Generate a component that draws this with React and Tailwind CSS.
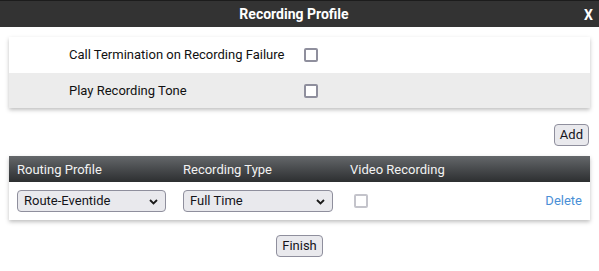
import React from "react";

const Chevron = () => (
  <svg width="9" height="6" viewBox="0 0 9 6" className="absolute right-[7px] top-[8px]">
    <path d="M1 1l3.5 3.5L8 1" fill="none" stroke="#1a1a1a" strokeWidth="1.8" />
  </svg>
);

const Select = ({ value, width }) => (
  <div
    className={`relative h-[22px] ${width} rounded-[4px] border border-[#8f8f9d] bg-[#e9e9ed] pl-[6px] text-[13px] leading-[20px] text-[#15141a]`}
  >
    {value}
    <Chevron />
  </div>
);

const Box = ({ disabled }) => (
  <div
    className={`h-[14px] w-[14px] rounded-[2px] border-2 ${disabled ? "border-[#c4c4cb]" : "border-[#8f8f9d]"} bg-white`}
  />
);

const Button = ({ children }) => (
  <button className="h-[22px] rounded-[4px] border border-[#8f8f9d] bg-[#e9e9ed] px-[5px] text-[13px] leading-[20px] text-[#15141a]">
    {children}
  </button>
);

export default function App() {
  return (
    <div className="h-[271px] w-[599px] bg-white" style={{ fontFamily: "Roboto, 'Liberation Sans', sans-serif" }}>
      {/* title bar */}
      <div className="relative flex h-[27px] items-center justify-center border-t border-[#1c1c1c] bg-[#333333] pr-[11px] text-[14px] font-bold text-white">
        Recording Profile
        <span className="absolute right-[6px] top-[4px]">X</span>
      </div>

      {/* options panel */}
      <div className="mx-[9px] mt-[10px] shadow-[0_2px_4px_rgba(0,0,0,0.25)]">
        <div className="flex h-[36px] items-center bg-white text-[13px] text-[#111]">
          <span className="w-[295px] pl-[60px]">Call Termination on Recording Failure</span>
          <Box />
        </div>
        <div className="flex h-[35px] items-center bg-[#ececec] text-[13px] text-[#111]">
          <span className="w-[295px] pl-[60px]">Play Recording Tone</span>
          <Box />
        </div>
      </div>

      <div className="mx-[10px] mt-[16px] flex justify-end">
        <Button>Add</Button>
      </div>

      {/* routing table */}
      <div className="mx-[9px] mt-[10px] shadow-[0_2px_4px_rgba(0,0,0,0.25)]">
        <div className="flex h-[26px] items-center bg-gradient-to-b from-[#65686b] to-[#2d2f31] pl-[8px] pt-[1px] text-[13px] text-[#f2f2f2]">
          <span className="w-[166px]">Routing Profile</span>
          <span className="w-[167px]">Recording Type</span>
          <span>Video Recording</span>
        </div>
        <div className="flex h-[38px] items-center bg-white pl-[8px] pr-[8px]">
          <Select value="Route-Eventide" width="w-[149px]" />
          <div className="w-[17px]" />
          <Select value="Full Time" width="w-[150px]" />
          <div className="ml-[21px]">
            <Box disabled />
          </div>
          <span className="ml-auto text-[13px] text-[#4a8fd6]">Delete</span>
        </div>
      </div>

      <div className="mt-[15px] flex justify-center">
        <Button>Finish</Button>
      </div>
    </div>
  );
}
